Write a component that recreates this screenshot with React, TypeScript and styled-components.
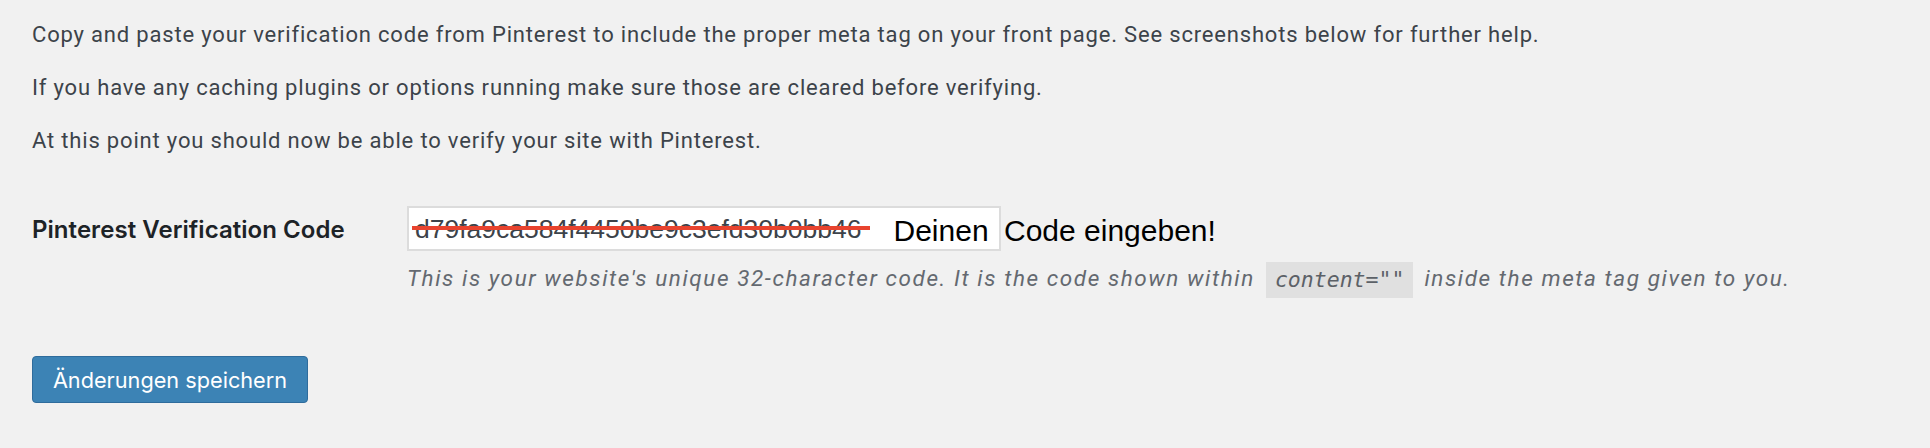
import React from "react";
import styled, { createGlobalStyle } from "styled-components";

const Global = createGlobalStyle`
  html, body { margin: 0; padding: 0; background: #f1f1f1; }
  body { width: 1930px; height: 448px; overflow: hidden; }
`;

const Page = styled.div`
  padding: 20px 0 0 32px;
  font-family: Roboto, "Noto Sans", sans-serif;
  color: #3c434a;
`;

const Para = styled.p`
  margin: 0 0 23px;
  font-size: 22px;
  letter-spacing: 0.82px;
  line-height: 30px;
`;

const FormRow = styled.div`
  display: flex;
  align-items: flex-start;
  margin-top: 50px;
`;

const Label = styled.div`
  width: 375px;
  flex: none;
  font-family: Inter, "Noto Sans", sans-serif;
  font-weight: 600;
  font-size: 24px;
  letter-spacing: 0.05px;
  line-height: 47px;
  color: #1d2327;
`;

const FieldCol = styled.div`
  display: flex;
  flex-direction: column;
`;

const InputLine = styled.div`
  display: flex;
  align-items: center;
`;

const InputBox = styled.div`
  position: relative;
  box-sizing: border-box;
  width: 594px;
  height: 45px;
  border: 2px solid #dcdcdc;
  background: #ffffff;
  display: flex;
  align-items: center;
  padding-left: 6px;
  font-family: "Liberation Sans", Arial, sans-serif;
`;

const OldCode = styled.span`
  font-size: 26.5px;
  color: #3c434a;
  margin-top: 2px;
`;

const Strike = styled.span`
  position: absolute;
  left: 3px;
  top: 18px;
  width: 458px;
  height: 4px;
  background: #e8432e;
`;

const Hint = styled.span<{ $gap?: number }>`
  font-family: "Liberation Sans", Arial, sans-serif;
  font-size: 30px;
  color: #000000;
  margin-left: ${(p) => p.$gap ?? 0}px;
  margin-top: 4px;
`;

const Description = styled.p`
  margin: 11px 0 0;
  font-size: 22.5px;
  letter-spacing: 1.58px;
  line-height: 30px;
  font-style: italic;
  color: #646970;
  white-space: nowrap;
`;

const Code = styled.code`
  display: inline-block;
  font-family: "DejaVu Sans Mono", "Liberation Mono", monospace;
  font-size: 21.5px;
  letter-spacing: 0;
  font-style: italic;
  line-height: 30px;
  padding: 3px 9px;
  margin: 0 4px;
  background: #e0e0e0;
  color: #5c6167;
  vertical-align: middle;
`;

const SaveButton = styled.button`
  margin-top: 58px;
  box-sizing: border-box;
  width: 276px;
  height: 47px;
  border: 1px solid #2f6c9c;
  border-radius: 4px;
  background: #3c83b5;
  color: #ffffff;
  font-family: Inter, "Noto Sans", sans-serif;
  font-size: 21.7px;
  padding: 0;
  cursor: pointer;
`;

export default function App() {
  return (
    <>
      <Global />
      <Page>
        <Para>
          Copy and paste your verification code from Pinterest to include the proper meta tag on your front page. See
          screenshots below for further help.
        </Para>
        <Para>If you have any caching plugins or options running make sure those are cleared before verifying.</Para>
        <Para>At this point you should now be able to verify your site with Pinterest.</Para>
        <FormRow>
          <Label>Pinterest Verification Code</Label>
          <FieldCol>
            <InputLine>
              <InputBox>
                <OldCode>d79fa9ca584f4450be9c3efd30b0bb46</OldCode>
                <Strike />
                <Hint $gap={32}>Deinen</Hint>
              </InputBox>
              <Hint $gap={3}>Code eingeben!</Hint>
            </InputLine>
            <Description>
              This is your website's unique 32-character code. It is the code shown within <Code>content=""</Code> inside
              the meta tag given to you.
            </Description>
          </FieldCol>
        </FormRow>
        <SaveButton>Änderungen speichern</SaveButton>
      </Page>
    </>
  );
}
